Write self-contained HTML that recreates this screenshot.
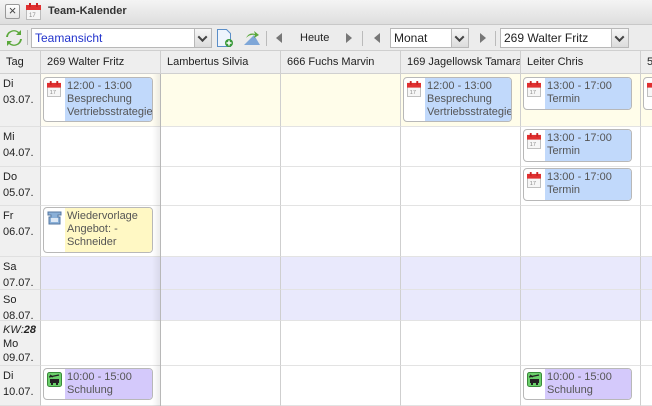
<!DOCTYPE html>
<html><head><meta charset="utf-8"><style>
*{box-sizing:border-box;margin:0;padding:0}
body{width:652px;height:406px;overflow:hidden;font-family:"Liberation Sans",sans-serif;font-size:11px;color:#222;background:#fff;position:relative}
.a{position:absolute}
.title{left:0;top:0;width:652px;height:25px;background:linear-gradient(#f4f4f4,#dedede);border-bottom:1px solid #c8c8c8}
.tb{left:0;top:25px;width:652px;height:26px;background:#ececec;border-bottom:1px solid #cfcfcf}
.sel{height:20px;top:3px;background:#fff;border:1px solid #b8b8b8;font-size:12px;line-height:18px;padding-left:3px;color:#222}
.sel .dd{position:absolute;right:0;top:0;width:17px;height:18px;background:linear-gradient(#f6f6f6,#dcdcdc);border-left:1px solid #b8b8b8}
.sel .dd:after{content:"";position:absolute;left:4px;top:6px;width:5px;height:5px;border-right:2px solid #444;border-bottom:2px solid #444;transform:rotate(45deg) translate(-1px,-1px)}
.sep{top:6px;width:1px;height:15px;background:#bbb}
.trl{width:0;height:0;border-top:5px solid transparent;border-bottom:5px solid transparent;border-right:6px solid #777;top:33px}
.trr{width:0;height:0;border-top:5px solid transparent;border-bottom:5px solid transparent;border-left:6px solid #777;top:33px}
.hd{top:51px;height:23px;background:#eeeeee;border-bottom:1px solid #d0d0d0;border-right:1px solid #cfcfcf;line-height:23px;padding-left:6px;font-size:11px;white-space:nowrap;overflow:hidden}
.tag{left:0;width:41px;background:#f0f0f0;border-right:1px solid #c8c8c8;border-bottom:1px solid #e0e0e0;padding:2px 0 0 3px;line-height:16px;font-size:11px}
.cell{border-right:1px solid #cfcfcf;border-bottom:1px solid #e3e3e3}
.card{border:1px solid #b8b8b8;border-radius:4px;background:#fff;overflow:hidden;font-size:11px;line-height:13px;color:#555}
.card .t{position:absolute;left:21px;top:0;right:0;bottom:0;padding:2px 0 0 2px;white-space:nowrap;overflow:hidden}
.card svg{position:absolute;left:3px;top:3px}
.blue .t{background:#c1d9fb}.yel .t{background:#fff8c4}.pur .t{background:#d4c9fb}
</style></head><body>
<div class="a title"></div>
<div class="a" style="left:5px;top:4px;width:15px;height:15px;border:1px solid #999;border-radius:2px;background:linear-gradient(#fff,#e6e6e6);font-size:13px;line-height:12px;text-align:center;color:#444">×</div>
<svg class="a" style="left:26px;top:3px" width="15" height="17" viewBox="0 0 15 17"><rect x="0.5" y="2.5" width="14" height="14" fill="#f6f6f6" stroke="#bbb"/><rect x="0" y="2" width="15" height="5" fill="#e03030"/><rect x="3" y="0" width="2" height="4" fill="#c22"/><rect x="10" y="0" width="2" height="4" fill="#c22"/><text x="3" y="14" font-size="6" fill="#888" font-family="Liberation Sans">17</text></svg>
<div class="a" style="left:48px;top:5px;font-weight:bold;font-size:11px;color:#333">Team-Kalender</div>

<div class="a tb"></div>
<svg class="a" style="left:5px;top:29px" width="18" height="18" viewBox="0 0 18 18"><path d="M3 8a6 6 0 0 1 10-4l-2 2h5V1l-2 2A8 8 0 0 0 1 8z" fill="#5aa83a"/><path d="M15 10a6 6 0 0 1-10 4l2-2H2v5l2-2a8 8 0 0 0 13-5z" fill="#5aa83a"/></svg>
<div class="a sep" style="left:27px;top:30px"></div>
<div class="a sel" style="left:31px;top:28px;width:181px;color:#2233cc">Teamansicht<div class="dd"></div></div>
<svg class="a" style="left:216px;top:28px" width="18" height="20" viewBox="0 0 18 20"><path d="M1.5 1.5h9l4 4v13h-13z" fill="#eef4fc" stroke="#5b8ec8"/><circle cx="13" cy="15" r="4" fill="#3a9a3a"/><path d="M13 12.5v5M10.5 15h5" stroke="#fff" stroke-width="1.5"/></svg>
<svg class="a" style="left:242px;top:30px" width="20" height="16" viewBox="0 0 20 16"><path d="M2 15L12 5l6 10z" fill="#7fa7d8"/><path d="M4 8q3-6 9-4l-1-3 5 4-5 3 1-3q-5-1-9 3z" fill="#5aa83a"/></svg>
<div class="a sep" style="left:266px;top:31px"></div>
<div class="a trl" style="left:276px"></div>
<div class="a" style="left:300px;top:32px;font-size:11px">Heute</div>
<div class="a trr" style="left:346px"></div>
<div class="a sep" style="left:362px;top:31px"></div>
<div class="a trl" style="left:374px"></div>
<div class="a sel" style="left:390px;top:28px;width:79px">Monat<div class="dd"></div></div>
<div class="a trr" style="left:480px"></div>
<div class="a sep" style="left:495px;top:31px"></div>
<div class="a sel" style="left:500px;top:28px;width:129px">269 Walter Fritz<div class="dd"></div></div>

<div class="a hd" style="left:0;width:41px">Tag</div>
<div class="a hd" style="left:41px;width:120px">269 Walter Fritz</div>
<div class="a hd" style="left:161px;width:120px">Lambertus Silvia</div>
<div class="a hd" style="left:281px;width:120px">666 Fuchs Marvin</div>
<div class="a hd" style="left:401px;width:120px">169 Jagellowsk Tamara</div>
<div class="a hd" style="left:521px;width:120px">Leiter Chris</div>
<div class="a hd" style="left:641px;width:20px">5</div>

<div class="a tag" style="top:74px;height:53px">Di<br>03.07.</div>
<div class="a tag" style="top:127px;height:40px">Mi<br>04.07.</div>
<div class="a tag" style="top:167px;height:39px">Do<br>05.07.</div>
<div class="a tag" style="top:206px;height:51px">Fr<br>06.07.</div>
<div class="a tag" style="top:257px;height:33px">Sa<br>07.07.</div>
<div class="a tag" style="top:290px;height:31px">So<br>08.07.</div>
<div class="a tag" style="top:321px;height:45px;line-height:14px"><i>KW:<b>28</b></i><br>Mo<br>09.07.</div>
<div class="a tag" style="top:366px;height:40px">Di<br>10.07.</div>

<div class="a cell" style="left:41px;top:74px;width:120px;height:53px;background:#fffdf2"></div>
<div class="a cell" style="left:161px;top:74px;width:120px;height:53px;background:#fffdea"></div>
<div class="a cell" style="left:281px;top:74px;width:120px;height:53px;background:#fffdea"></div>
<div class="a cell" style="left:401px;top:74px;width:120px;height:53px;background:#fffdea"></div>
<div class="a cell" style="left:521px;top:74px;width:120px;height:53px;background:#fffdea"></div>
<div class="a cell" style="left:641px;top:74px;width:20px;height:53px;background:#fffdea"></div>

<div class="a cell" style="left:41px;top:127px;width:120px;height:40px"></div><div class="a cell" style="left:161px;top:127px;width:120px;height:40px"></div><div class="a cell" style="left:281px;top:127px;width:120px;height:40px"></div><div class="a cell" style="left:401px;top:127px;width:120px;height:40px"></div><div class="a cell" style="left:521px;top:127px;width:120px;height:40px"></div><div class="a cell" style="left:641px;top:127px;width:20px;height:40px"></div>
<div class="a cell" style="left:41px;top:167px;width:120px;height:39px"></div><div class="a cell" style="left:161px;top:167px;width:120px;height:39px"></div><div class="a cell" style="left:281px;top:167px;width:120px;height:39px"></div><div class="a cell" style="left:401px;top:167px;width:120px;height:39px"></div><div class="a cell" style="left:521px;top:167px;width:120px;height:39px"></div><div class="a cell" style="left:641px;top:167px;width:20px;height:39px"></div>
<div class="a cell" style="left:41px;top:206px;width:120px;height:51px"></div><div class="a cell" style="left:161px;top:206px;width:120px;height:51px"></div><div class="a cell" style="left:281px;top:206px;width:120px;height:51px"></div><div class="a cell" style="left:401px;top:206px;width:120px;height:51px"></div><div class="a cell" style="left:521px;top:206px;width:120px;height:51px"></div><div class="a cell" style="left:641px;top:206px;width:20px;height:51px"></div>
<div class="a cell" style="left:41px;top:257px;width:120px;height:33px;background:#e9e9fc"></div><div class="a cell" style="left:161px;top:257px;width:120px;height:33px;background:#e9e9fc"></div><div class="a cell" style="left:281px;top:257px;width:120px;height:33px;background:#e9e9fc"></div><div class="a cell" style="left:401px;top:257px;width:120px;height:33px;background:#e9e9fc"></div><div class="a cell" style="left:521px;top:257px;width:120px;height:33px;background:#e9e9fc"></div><div class="a cell" style="left:641px;top:257px;width:20px;height:33px;background:#e9e9fc"></div>
<div class="a cell" style="left:41px;top:290px;width:120px;height:31px;background:#e9e9fc"></div><div class="a cell" style="left:161px;top:290px;width:120px;height:31px;background:#e9e9fc"></div><div class="a cell" style="left:281px;top:290px;width:120px;height:31px;background:#e9e9fc"></div><div class="a cell" style="left:401px;top:290px;width:120px;height:31px;background:#e9e9fc"></div><div class="a cell" style="left:521px;top:290px;width:120px;height:31px;background:#e9e9fc"></div><div class="a cell" style="left:641px;top:290px;width:20px;height:31px;background:#e9e9fc"></div>
<div class="a cell" style="left:41px;top:321px;width:120px;height:45px"></div><div class="a cell" style="left:161px;top:321px;width:120px;height:45px"></div><div class="a cell" style="left:281px;top:321px;width:120px;height:45px"></div><div class="a cell" style="left:401px;top:321px;width:120px;height:45px"></div><div class="a cell" style="left:521px;top:321px;width:120px;height:45px"></div><div class="a cell" style="left:641px;top:321px;width:20px;height:45px"></div>
<div class="a cell" style="left:41px;top:366px;width:120px;height:40px"></div><div class="a cell" style="left:161px;top:366px;width:120px;height:40px"></div><div class="a cell" style="left:281px;top:366px;width:120px;height:40px"></div><div class="a cell" style="left:401px;top:366px;width:120px;height:40px"></div><div class="a cell" style="left:521px;top:366px;width:120px;height:40px"></div><div class="a cell" style="left:641px;top:366px;width:20px;height:40px"></div>

<div class="a" style="left:152px;top:74px;width:8px;height:332px;background:linear-gradient(90deg,rgba(0,0,0,0),rgba(0,0,0,0.07))"></div>
<div class="a" style="left:160px;top:74px;width:1px;height:332px;background:#b8b8b8"></div>

<div class="a card blue" style="left:43px;top:77px;width:110px;height:45px"><svg width="14" height="16" viewBox="0 0 15 17"><rect x="0.5" y="2.5" width="14" height="14" fill="#f6f6f6" stroke="#bbb"/><rect x="0" y="2" width="15" height="5" fill="#e03030"/><rect x="3" y="0" width="2" height="4" fill="#c22"/><rect x="10" y="0" width="2" height="4" fill="#c22"/><text x="3" y="14" font-size="6" fill="#888">17</text></svg><div class="t">12:00 - 13:00<br>Besprechung<br>Vertriebsstrategie</div></div>
<div class="a card blue" style="left:403px;top:77px;width:109px;height:45px"><svg width="14" height="16" viewBox="0 0 15 17"><rect x="0.5" y="2.5" width="14" height="14" fill="#f6f6f6" stroke="#bbb"/><rect x="0" y="2" width="15" height="5" fill="#e03030"/><rect x="3" y="0" width="2" height="4" fill="#c22"/><rect x="10" y="0" width="2" height="4" fill="#c22"/><text x="3" y="14" font-size="6" fill="#888">17</text></svg><div class="t">12:00 - 13:00<br>Besprechung<br>Vertriebsstrategie</div></div>
<div class="a card blue" style="left:523px;top:77px;width:109px;height:33px"><svg width="14" height="16" viewBox="0 0 15 17"><rect x="0.5" y="2.5" width="14" height="14" fill="#f6f6f6" stroke="#bbb"/><rect x="0" y="2" width="15" height="5" fill="#e03030"/><rect x="3" y="0" width="2" height="4" fill="#c22"/><rect x="10" y="0" width="2" height="4" fill="#c22"/><text x="3" y="14" font-size="6" fill="#888">17</text></svg><div class="t">13:00 - 17:00<br>Termin</div></div>
<div class="a card blue" style="left:643px;top:77px;width:30px;height:33px"><svg width="14" height="16" viewBox="0 0 15 17"><rect x="0.5" y="2.5" width="14" height="14" fill="#f6f6f6" stroke="#bbb"/><rect x="0" y="2" width="15" height="5" fill="#e03030"/></svg></div>
<div class="a card blue" style="left:523px;top:129px;width:109px;height:33px"><svg width="14" height="16" viewBox="0 0 15 17"><rect x="0.5" y="2.5" width="14" height="14" fill="#f6f6f6" stroke="#bbb"/><rect x="0" y="2" width="15" height="5" fill="#e03030"/><rect x="3" y="0" width="2" height="4" fill="#c22"/><rect x="10" y="0" width="2" height="4" fill="#c22"/><text x="3" y="14" font-size="6" fill="#888">17</text></svg><div class="t">13:00 - 17:00<br>Termin</div></div>
<div class="a card blue" style="left:523px;top:168px;width:109px;height:33px"><svg width="14" height="16" viewBox="0 0 15 17"><rect x="0.5" y="2.5" width="14" height="14" fill="#f6f6f6" stroke="#bbb"/><rect x="0" y="2" width="15" height="5" fill="#e03030"/><rect x="3" y="0" width="2" height="4" fill="#c22"/><rect x="10" y="0" width="2" height="4" fill="#c22"/><text x="3" y="14" font-size="6" fill="#888">17</text></svg><div class="t">13:00 - 17:00<br>Termin</div></div>
<div class="a card yel" style="left:43px;top:207px;width:110px;height:46px"><svg width="15" height="14" viewBox="0 0 15 14"><path d="M1 1h13v3h-3v2h2v7H2V6h2V4H1z" fill="#8ab0d8" stroke="#5577a0"/><rect x="4" y="7" width="7" height="4" fill="#dde8f5"/></svg><div class="t">Wiedervorlage<br>Angebot: -<br>Schneider</div></div>
<div class="a card pur" style="left:43px;top:368px;width:110px;height:32px"><svg width="15" height="15" viewBox="0 0 15 15"><rect x="0.5" y="0.5" width="14" height="14" rx="2" fill="#6cd06c" stroke="#3a8a3a"/><path d="M2 5l10-2M3 3l3 2" stroke="#222" stroke-width="1.3"/><rect x="3" y="7" width="9" height="4" fill="#222"/><rect x="4" y="11" width="2" height="2" fill="#222"/><rect x="9" y="11" width="2" height="2" fill="#222"/></svg><div class="t">10:00 - 15:00<br>Schulung</div></div>
<div class="a card pur" style="left:523px;top:368px;width:109px;height:32px"><svg width="15" height="15" viewBox="0 0 15 15"><rect x="0.5" y="0.5" width="14" height="14" rx="2" fill="#6cd06c" stroke="#3a8a3a"/><path d="M2 5l10-2M3 3l3 2" stroke="#222" stroke-width="1.3"/><rect x="3" y="7" width="9" height="4" fill="#222"/><rect x="4" y="11" width="2" height="2" fill="#222"/><rect x="9" y="11" width="2" height="2" fill="#222"/></svg><div class="t">10:00 - 15:00<br>Schulung</div></div>
</body></html>
